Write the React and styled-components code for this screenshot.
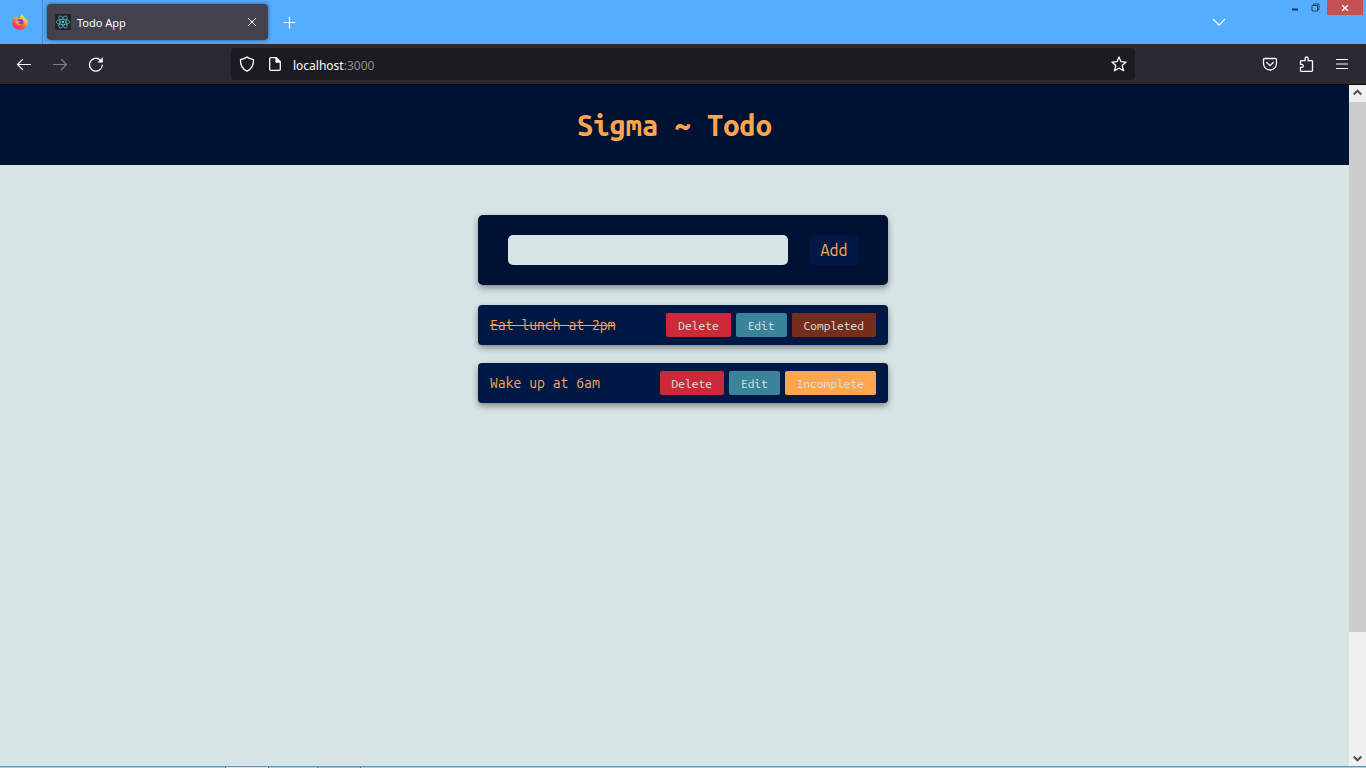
import React, { useState } from "react";
import styled, { createGlobalStyle } from "styled-components";

const GlobalStyle = createGlobalStyle`
  *, *::before, *::after { box-sizing: border-box; }
  body { margin: 0; background: #d6e4e5; font-family: "Noto Sans", sans-serif; }
  button, input { font: inherit; border: 0; padding: 0; margin: 0; }
  button { background: none; cursor: pointer; }
  h1, ul, p { margin: 0; padding: 0; }
  svg { display: block; }
`;

const mono = `"Ubuntu Mono", "DejaVu Sans Mono", monospace`;

const Window = styled.div`
  display: flex;
  flex-direction: column;
  height: 100vh;
  overflow: hidden;
`;

const TabStrip = styled.header`
  display: flex;
  height: 44px;
  flex: none;
  background: #54adff;
  color: #fbfbfe;
`;

const BrandCell = styled.div`
  display: flex;
  align-items: center;
  width: 43px;
  padding-left: 12px;
  border-right: 1px solid #438acc;
`;

const Tab = styled.div`
  display: flex;
  align-items: center;
  width: 221px;
  height: 36px;
  margin: 4px 0 0 4px;
  padding: 0 8px;
  gap: 6px;
  border-radius: 4px;
  background: #42414d;
  box-shadow: 0 0 4px rgba(0, 0, 0, 0.5);
  font-size: 11px;
`;

const TabTitle = styled.span`
  flex: 1;
  padding-top: 1px;
`;

const StripButton = styled.button`
  display: grid;
  place-items: center;
  width: ${(p) => p.$width || 36}px;
  height: ${(p) => p.$height || 44}px;
  color: inherit;
`;

const TabClose = styled(StripButton)`
  width: 16px;
  height: 16px;
`;

const NewTab = styled(StripButton)`
  margin-left: 4px;
`;

const AllTabs = styled(StripButton)`
  margin-left: auto;
  margin-right: 48px;
`;

const WindowControls = styled.div`
  display: flex;
  padding-right: 3px;
  color: #17395a;
`;

const WindowClose = styled(StripButton)`
  background: #c75050;
  color: #fff;
`;

const Toolbar = styled.nav`
  display: flex;
  align-items: center;
  flex: none;
  height: 41px;
  background: #2b2a33;
  border-bottom: 1px solid #0c0c0d;
  color: #fbfbfe;
`;

const ToolGroup = styled.div`
  display: flex;
  width: 231px;
  padding: 0 6px;
  justify-content: ${(p) => (p.$end ? "flex-end" : "flex-start")};
`;

const ToolButton = styled.button`
  display: grid;
  place-items: center;
  width: 36px;
  height: 32px;
  color: inherit;
  opacity: ${(p) => (p.disabled ? 0.4 : 1)};
`;

const AddressBar = styled.div`
  display: flex;
  align-items: center;
  flex: 1;
  height: 32px;
  padding: 0 8px;
  gap: 12px;
  border-radius: 4px;
  background: #1c1b22;
  font-size: 12px;
`;

const Address = styled.p`
  flex: 1;
  margin-left: -2px;
  padding-top: 2px;
  span { color: #8f8f99; }
`;

const BarButton = styled(ToolButton)`
  width: 16px;
  height: 16px;
`;

const Viewport = styled.div`
  display: flex;
  flex: 1;
  min-height: 0;
`;

const Page = styled.div`
  flex: 1;
  min-width: 0;
  overflow: hidden;
  background: #d6e4e5;
`;

const Banner = styled.header`
  display: grid;
  place-items: center;
  height: 80px;
  background: #001233;
`;

const Title = styled.h1`
  color: #ffa54f;
  font: bold 29px/32px ${mono};
`;

const Main = styled.main`
  display: flex;
  flex-direction: column;
  align-items: center;
  width: 100vw;
  padding-top: 50px;
`;

const AddForm = styled.form`
  display: flex;
  justify-content: space-between;
  width: 410px;
  padding: 20px 30px;
  border-radius: 5px;
  background: #001233;
  box-shadow: 0 3px 6px rgba(0, 0, 0, 0.4);
`;

const TaskInput = styled.input`
  width: 280px;
  height: 30px;
  padding: 0 10px;
  border-radius: 5px;
  background: #d6e4e5;
  color: #001233;
  font: 16px ${mono};
  outline: none;
`;

const AddButton = styled.button`
  width: 48px;
  height: 30px;
  border-radius: 4px;
  background: #001845;
  color: #ffa54f;
  font: 16px ${mono};
`;

const TaskList = styled.ul`
  display: flex;
  flex-direction: column;
  gap: 18px;
  width: 410px;
  margin-top: 20px;
  list-style: none;
`;

const Task = styled.li`
  display: flex;
  align-items: center;
  height: 40px;
  padding: 0 12px;
  gap: 5px;
  border-radius: 4px;
  background: #001845;
  box-shadow: 0 3px 6px rgba(0, 0, 0, 0.4);
`;

const TaskText = styled.span`
  flex: 1;
  color: #ffa54f;
  font: 14px/20px ${mono};
  text-decoration: ${(p) => (p.$done ? "line-through" : "none")};
`;

const TaskButton = styled.button`
  height: 24px;
  padding: 1px 12px 0;
  border-radius: 2px;
  background: ${(p) => p.$color};
  color: #d6e4e5;
  font: 12px ${mono};
`;

const Scrollbar = styled.div`
  display: flex;
  flex-direction: column;
  width: 17px;
  background: #f0f0f0;
`;

const ScrollArrow = styled.button`
  display: grid;
  place-items: center;
  flex: none;
  height: 15px;
  color: #505050;
`;

const ScrollTrack = styled.div`
  flex: 1;
  padding-top: 2px;
`;

const ScrollThumb = styled.div`
  height: 81.7%;
  background: #cdcdcd;
`;

const BottomEdge = styled.footer`
  display: flex;
  flex: none;
  height: 2px;
  padding-left: 225px;
  gap: 48px;
  border-top: 1px solid #6096b8;
  background: #9bd5ed;
`;

const EdgePiece = styled.span`
  width: 44px;
  height: 1px;
  border: solid #567b98;
  border-width: 0 1px;
  background: ${(p) => p.$color};
`;

function Icon({ size = 16, width = 1.3, children }) {
  return (
    <svg width={size} height={size} viewBox="0 0 16 16" fill="none" stroke="currentColor"
      strokeWidth={width} strokeLinecap="round" strokeLinejoin="round" aria-hidden="true">
      {children}
    </svg>
  );
}

function FirefoxLogo() {
  return (
    <svg width="16" height="16" viewBox="0 0 18 18" aria-hidden="true">
      <defs>
        <linearGradient id="fire" x1="0.85" y1="0" x2="0.25" y2="1">
          <stop offset="0" stopColor="#fff44f" />
          <stop offset="0.4" stopColor="#ffb42e" />
          <stop offset="0.65" stopColor="#ff5a3c" />
          <stop offset="1" stopColor="#f5218c" />
        </linearGradient>
      </defs>
      <path fill="url(#fire)" d="M16.2 6.5c-.5-1.2-1.6-2.3-2.4-2.8C12.6 2.7 11.900 1.700 11.500 0 9.800 1.200 9.100 3 9 4.500c-.9 0-1.700.2-2.400.6C5.800 4.700 5.500 3.700 5.600 2.800 4.600 3.300 4 4.200 3.600 4.700c-.4-.3-.5-.8-.4-1.600C1.200 4.700.2 7.100.2 9.500c.2 4.700 4.200 8.300 8.900 8.300 5 0 8.700-3.900 8.700-8.700 0-.9-.7-1.800-1.600-2.600z" />
      <path fill="#7542e5" d="M9.300 5.700c-2.500 0-3.600 1.400-4.300 2.200.8-.3 1.700 0 2.300.4-.8.3-1.700.9-1.600 2.100.2 1.900 1.700 2.800 3.500 2.800 2.200 0 3.800-1.600 3.800-3.700 0-2.300-1.600-3.800-3.700-3.800z" />
      <path fill="#ff9640" d="M3.500 7.700c1-.9 2.700-.7 3.600.1.700.5 1.500.6 2.500.6-.3 1.200-1.600 1.300-2 1.700-.5.500.5 1.500 1.800 1.300 1.100-.2 1.800-.7 2.600-.5-1 2.300-6.500 2.500-7.700-.5z" />
    </svg>
  );
}

function ReactLogo() {
  return (
    <svg width="16" height="16" viewBox="0 0 16 16" fill="none" stroke="#58c4dc" strokeWidth="0.7" aria-hidden="true">
      <rect width="16" height="16" rx="1" fill="#222426" stroke="none" />
      <ellipse cx="8" cy="8" rx="6.800" ry="2.700" />
      <ellipse cx="8" cy="8" rx="6.800" ry="2.700" transform="rotate(60 8 8)" />
      <ellipse cx="8" cy="8" rx="6.800" ry="2.700" transform="rotate(120 8 8)" />
      <circle cx="8" cy="8" r="1.300" fill="#58c4dc" stroke="none" />
    </svg>
  );
}

const initialTasks = [
  { id: 1, text: "Eat lunch at 2pm", done: true },
  { id: 2, text: "Wake up at 6am", done: false },
];

function TodoPage() {
  const [tasks, setTasks] = useState(initialTasks);
  const [draft, setDraft] = useState("");

  const add = (event) => {
    event.preventDefault();
    if (!draft.trim()) return;
    setTasks([{ id: Date.now(), text: draft.trim(), done: false }, ...tasks]);
    setDraft("");
  };
  const remove = (id) => setTasks(tasks.filter((t) => t.id !== id));
  const toggle = (id) => setTasks(tasks.map((t) => (t.id === id ? { ...t, done: !t.done } : t)));
  const edit = (task) => {
    setDraft(task.text);
    remove(task.id);
  };

  return (
    <Page>
      <Banner>
        <Title>Sigma ~ Todo</Title>
      </Banner>
      <Main>
        <AddForm onSubmit={add}>
          <TaskInput aria-label="New task" value={draft} onChange={(e) => setDraft(e.target.value)} />
          <AddButton type="submit">Add</AddButton>
        </AddForm>
        <TaskList>
          {tasks.map((task) => (
            <Task key={task.id}>
              <TaskText $done={task.done}>{task.text}</TaskText>
              <TaskButton $color="#cb2b38" onClick={() => remove(task.id)}>Delete</TaskButton>
              <TaskButton $color="#3a8499" onClick={() => edit(task)}>Edit</TaskButton>
              <TaskButton $color={task.done ? "#762d1b" : "#ffa54f"} onClick={() => toggle(task.id)}>
                {task.done ? "Completed" : "Incomplete"}
              </TaskButton>
            </Task>
          ))}
        </TaskList>
      </Main>
    </Page>
  );
}

export default function App() {
  return (
    <>
      <GlobalStyle />
      <Window>
        <TabStrip>
          <BrandCell><FirefoxLogo /></BrandCell>
          <Tab>
            <ReactLogo />
            <TabTitle>Todo App</TabTitle>
            <TabClose aria-label="Close tab">
              <Icon width={1}><path d="M4.300 4.300l7.400 7.400M11.700 4.300l-7.400 7.400" /></Icon>
            </TabClose>
          </Tab>
          <NewTab aria-label="New tab">
            <Icon width={1.2}><path d="M7.500 3v11M2 8.500h11" /></Icon>
          </NewTab>
          <AllTabs aria-label="List all tabs">
            <Icon width={1.3}><path d="M2.500 5.500L8 11l5.500-5.500" /></Icon>
          </AllTabs>
          <WindowControls>
            <StripButton $width={20} $height={15} aria-label="Minimize">
              <svg width="8" height="9" viewBox="0 0 8 9" aria-hidden="true"><path d="M1 5.500h6v2H1z" fill="currentColor" /></svg>
            </StripButton>
            <StripButton $width={20} $height={15} aria-label="Restore">
              <svg width="9" height="9" viewBox="0 0 9 9" fill="none" stroke="currentColor" strokeWidth="0.9" aria-hidden="true">
                <path d="M1 2.500h5.500v5.500H1zM2.500 2.500V1H8v5.500H6.500" />
              </svg>
            </StripButton>
            <StripButton $width={2} $height={15} as="span" />
            <WindowClose $width={36} $height={15} aria-label="Close window">
              <svg width="8" height="8" viewBox="0 0 8 8" stroke="currentColor" strokeWidth="1.400" aria-hidden="true">
                <path d="M1.200 1.200l5.600 5.600M6.800 1.200L1.200 6.800" />
              </svg>
            </WindowClose>
          </WindowControls>
        </TabStrip>
        <Toolbar>
          <ToolGroup>
            <ToolButton aria-label="Back">
              <Icon width={1.2}><path d="M14.500 8.500h-13M6.500 3.500L1.500 8.500l5 5" /></Icon>
            </ToolButton>
            <ToolButton aria-label="Forward" disabled>
              <Icon width={1.2}><path d="M1.500 8.500h13M9.500 3.500l5 5-5 5" /></Icon>
            </ToolButton>
            <ToolButton aria-label="Reload">
              <Icon>
                <path d="M14.300 9.200A6.400 6.400 0 1 1 12.300 4" />
                <path d="M14.500 2v4.200h-4.200z" fill="currentColor" strokeWidth="0.600" />
              </Icon>
            </ToolButton>
          </ToolGroup>
          <AddressBar>
            <BarButton aria-label="Tracking protection">
              <Icon><path d="M8 1C6.800 2.400 4 3 1.500 3.700 1.200 9 3.500 13 8 15.200 12.500 13 14.800 9 14.500 3.700 12 3 9.200 2.400 8 1z" /></Icon>
            </BarButton>
            <BarButton aria-label="Site information">
              <Icon>
                <path d="M3.700 1.700h5.600l4 4v7.600q0 1-1 1H3.700q-1 0-1-1V2.700q0-1 1-1z" />
                <path d="M9 1.700v4.300h4.300z" fill="currentColor" />
              </Icon>
            </BarButton>
            <Address>localhost<span>:3000</span></Address>
            <BarButton aria-label="Bookmark this page">
              <Icon><path d="M8 1l2 4.700 5.100.4-3.900 3.400 1.300 5.200L8 12l-4.500 2.700 1.300-5.200L.9 6.100 6 5.700z" /></Icon>
            </BarButton>
          </AddressBar>
          <ToolGroup $end>
            <ToolButton aria-label="Save to Pocket">
              <Icon><path d="M2.700 2.500h10.600q1.200 0 1.200 1.200v3.800a6.500 6.500 0 0 1-13 0V3.700q0-1.200 1.200-1.200zM4.800 6.500L8 9.600l3.200-3.100" /></Icon>
            </ToolButton>
            <ToolButton aria-label="Extensions">
              <Icon><path d="M3.200 15.300q-.7 0-.7-.7v-3.200h1.300a1.500 1.500 0 0 0 0-3H2.500V5.500q0-.8.800-.8h3.800V2.500a1.500 1.500 0 0 1 3 0v2.200h3.600q.8 0 .8.800v9q0 .8-.8.800z" /></Icon>
            </ToolButton>
            <ToolButton aria-label="Open menu">
              <Icon width={1.2}><path d="M2.500 3.500h11M2.500 8h11M2.500 12.500h11" /></Icon>
            </ToolButton>
          </ToolGroup>
        </Toolbar>
        <Viewport>
          <TodoPage />
          <Scrollbar>
            <ScrollArrow aria-label="Scroll up">
              <svg width="9" height="7" viewBox="0 0 9 7" fill="none" stroke="currentColor" strokeWidth="2" aria-hidden="true"><path d="M.7 5.500L4.500 1.700 8.300 5.500" /></svg>
            </ScrollArrow>
            <ScrollTrack><ScrollThumb /></ScrollTrack>
            <ScrollArrow aria-label="Scroll down">
              <svg width="9" height="7" viewBox="0 0 9 7" fill="none" stroke="currentColor" strokeWidth="2" aria-hidden="true"><path d="M.7 1.500l3.800 3.800L8.300 1.500" /></svg>
            </ScrollArrow>
          </Scrollbar>
        </Viewport>
        <BottomEdge>
          <EdgePiece $color="#d9e3e8" />
          <EdgePiece $color="#8ec0e0" />
        </BottomEdge>
      </Window>
    </>
  );
}
